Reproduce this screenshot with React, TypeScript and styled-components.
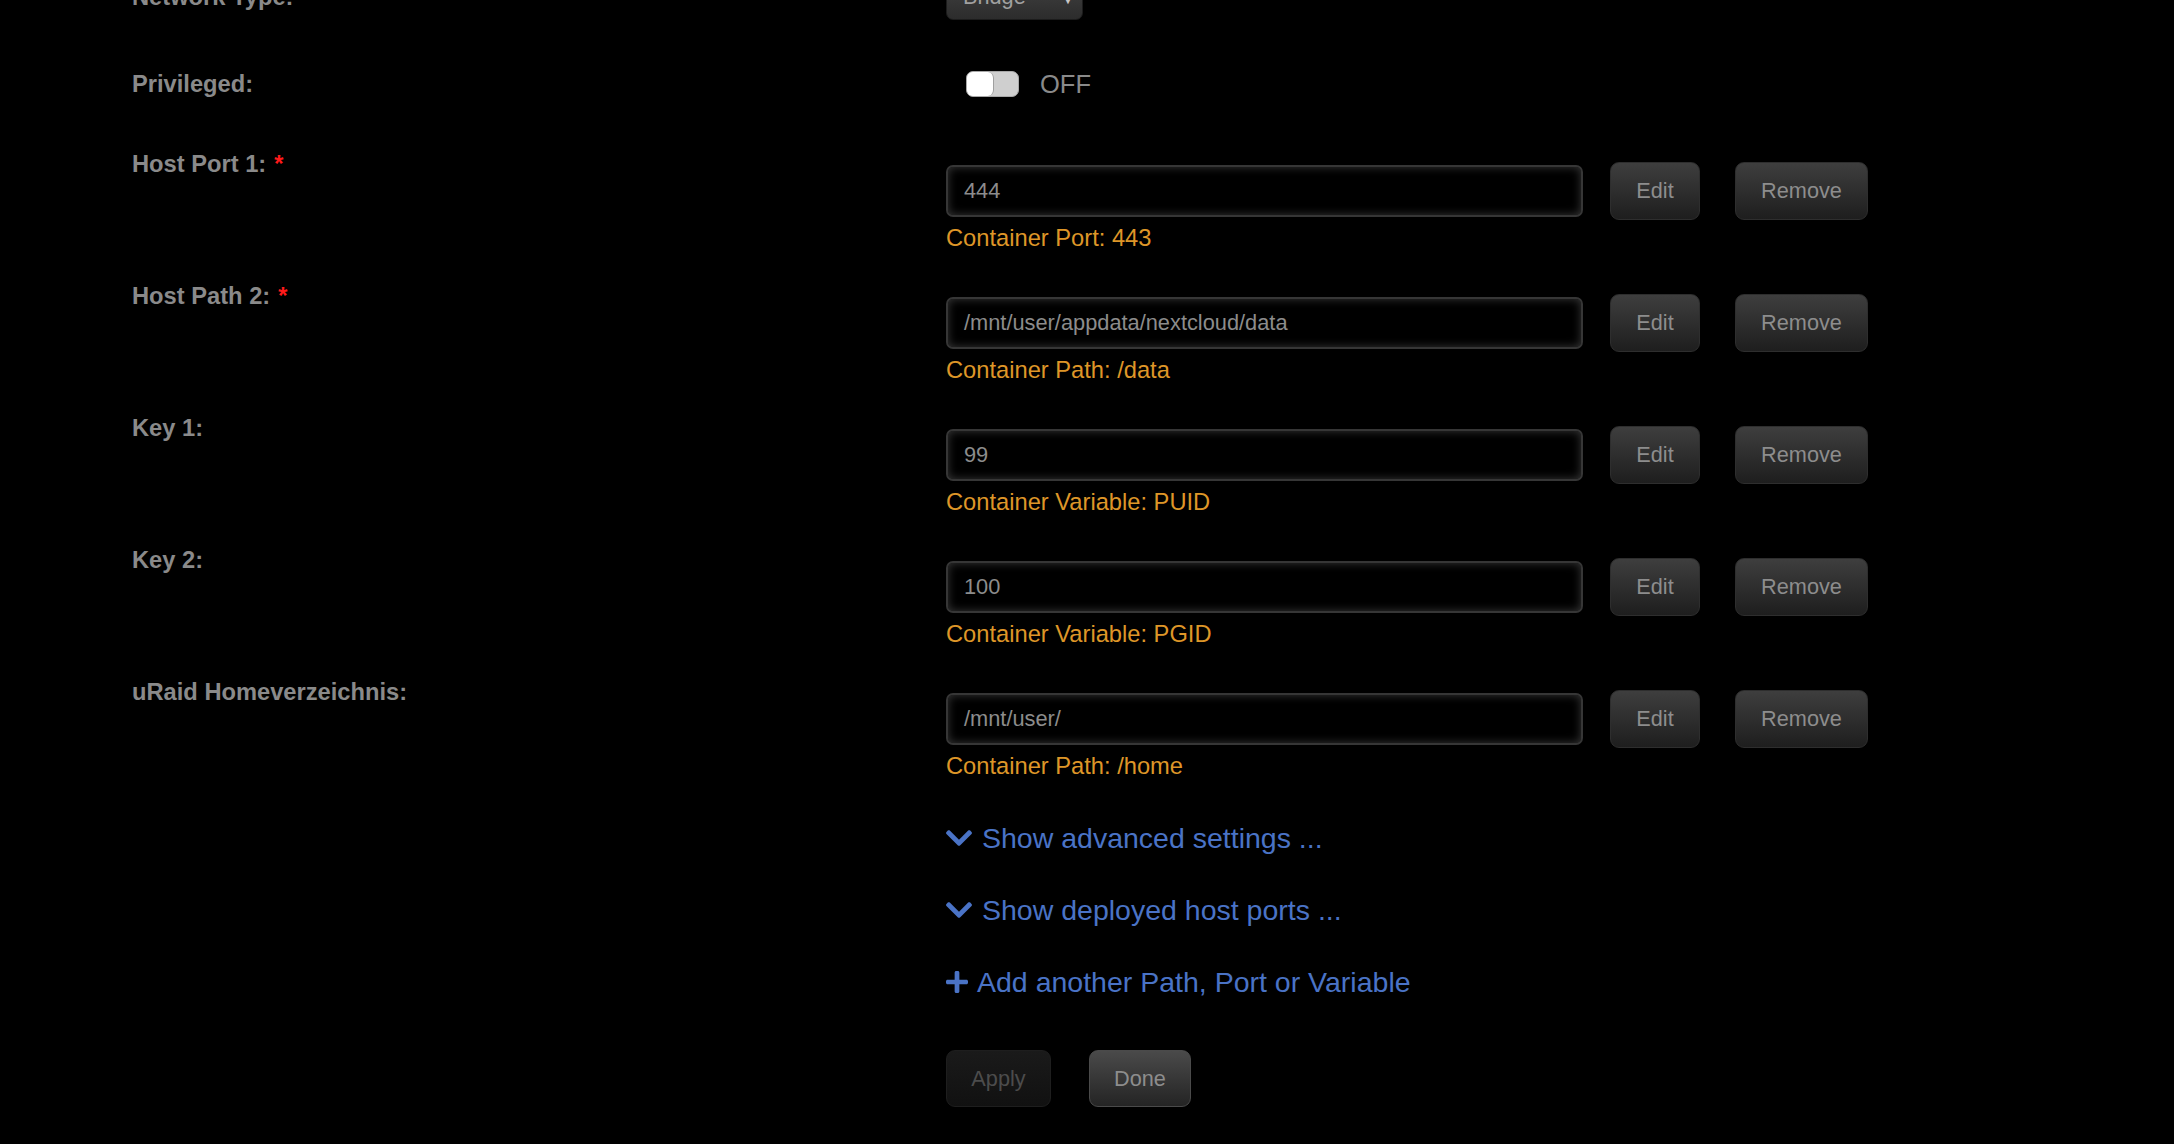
import React from "react";
import styled, { createGlobalStyle } from "styled-components";

const Global = createGlobalStyle`
  html, body {
    margin: 0;
    padding: 0;
    background: #000;
    overflow: hidden;
  }
  body {
    font-family: "Liberation Sans", Arial, sans-serif;
    color: #8a8a8a;
  }
`;

const Page = styled.div`
  width: 2174px;
  height: 1144px;
  overflow: hidden;
  background: #000;
`;

const Form = styled.div`
  display: flex;
  flex-direction: column;
  padding-left: 132px;
  margin-top: -27px;
`;

const Row = styled.div<{ $center?: boolean; $gap: number }>`
  display: grid;
  grid-template-columns: 814px 1fr;
  align-items: ${(p) => (p.$center ? "center" : "start")};
  margin-bottom: ${(p) => p.$gap}px;
`;

const Label = styled.div`
  font-size: 23.7px;
  line-height: 32px;
  font-weight: bold;
  color: #8a8a8a;
  white-space: nowrap;
`;

const Required = styled.span`
  color: #ff1a1a;
  margin-left: 8px;
`;

const Content = styled.div`
  display: flex;
  flex-direction: column;
  padding-top: 14px;
`;

const InputRow = styled.div`
  display: flex;
  align-items: center;
  height: 58px;
`;

const TextInput = styled.div`
  box-sizing: border-box;
  width: 637px;
  height: 52px;
  border: 2px solid #363636;
  border-radius: 7px;
  background: #000;
  box-shadow: inset 0 0 10px rgba(140, 140, 140, 0.4);
  display: flex;
  align-items: center;
  padding-left: 16px;
  font-size: 21.8px;
  color: #8c8c8c;
`;

const Button = styled.div<{ $w: number; $disabled?: boolean; $light?: boolean }>`
  box-sizing: border-box;
  width: ${(p) => p.$w}px;
  height: 57px;
  border-radius: 9px;
  border: 1.5px solid ${(p) => (p.$disabled ? "#1e1e1e" : p.$light ? "#4a4a4a" : "#2e2e2e")};
  background: ${(p) =>
    p.$disabled
      ? "linear-gradient(#1a1a1a, #111111)"
      : p.$light
      ? "linear-gradient(#4a4a4a, #242424)"
      : "linear-gradient(#3e3e3e, #1e1e1e)"};
  color: ${(p) => (p.$disabled ? "#4c4c4c" : "#8d8d8d")};
  font-size: 21.7px;
  display: flex;
  align-items: center;
  justify-content: center;
`;

const EditButton = styled(Button)`
  margin-left: 27px;
  height: 58px;
`;

const RemoveButton = styled(Button)`
  margin-left: 35px;
  height: 58px;
`;

const Hint = styled.div`
  margin-top: 3px;
  font-size: 23.7px;
  line-height: 30px;
  color: #de9628;
`;

const Select = styled.div`
  box-sizing: border-box;
  width: 137px;
  height: 47px;
  border-radius: 7px;
  border: 1px solid #1c1c1c;
  background: linear-gradient(#454545, #2c2c2c);
  display: flex;
  align-items: center;
  justify-content: space-between;
  padding: 0 8px 0 16px;
  font-size: 21.7px;
  color: #a0a0a0;
`;

const Caret = styled.span`
  font-size: 12px;
  color: #c8c8c8;
  padding-top: 6px;
`;

const SwitchWrap = styled.div`
  display: flex;
  align-items: center;
  padding-left: 20px;
  gap: 21px;
`;

const Track = styled.div`
  box-sizing: border-box;
  width: 53px;
  height: 26px;
  border-radius: 7px;
  background: #cfcfcf;
  border: 1.5px solid #a8a8a8;
  display: flex;
  align-items: stretch;
`;

const Knob = styled.div`
  width: 26px;
  border-radius: 6px;
  background: #fff;
  border-right: 1.5px solid #a0a0a0;
`;

const SwitchText = styled.span`
  font-size: 25.5px;
  color: #8a8a8a;
`;

const Actions = styled.div`
  display: flex;
  flex-direction: column;
  margin-left: 814px;
  margin-top: 12px;
`;

const LinkLine = styled.div<{ $gap: number }>`
  display: flex;
  align-items: center;
  gap: ${(p) => p.$gap}px;
  height: 36px;
  margin-bottom: 36px;
  font-size: 28.5px;
  color: #4a73c6;
  white-space: nowrap;
`;

const ButtonBar = styled.div`
  display: flex;
  gap: 38px;
  margin-top: 14px;
`;

const Chevron = () => (
  <svg width="26" height="16" viewBox="5 122 438 268" fill="#4a73c6">
    <path d="M207.029 381.476L12.686 187.132c-9.373-9.373-9.373-24.569 0-33.941l22.667-22.667c9.357-9.357 24.522-9.375 33.901-.04L224 284.505l154.745-154.021c9.379-9.335 24.544-9.317 33.901.04l22.667 22.667c9.373 9.373 9.373 24.569 0 33.941L240.971 381.476c-9.373 9.372-24.569 9.372-33.942 0z" />
  </svg>
);

const Plus = () => (
  <svg width="22" height="22" viewBox="0 32 448 448" fill="#4a73c6">
    <path d="M416 208H272V64c0-17.67-14.330-32-32-32h-32c-17.67 0-32 14.33-32 32v144H32c-17.67 0-32 14.33-32 32v32c0 17.67 14.33 32 32 32h144v144c0 17.67 14.33 32 32 32h32c17.67 0 32-14.33 32-32V304h144c17.67 0 32-14.33 32-32v-32c0-17.67-14.33-32-32-32z" />
  </svg>
);

type Entry = { label: string; required?: boolean; value: string; hint: string };

const entries: Entry[] = [
  { label: "Host Port 1:", required: true, value: "444", hint: "Container Port: 443" },
  { label: "Host Path 2:", required: true, value: "/mnt/user/appdata/nextcloud/data", hint: "Container Path: /data" },
  { label: "Key 1:", value: "99", hint: "Container Variable: PUID" },
  { label: "Key 2:", value: "100", hint: "Container Variable: PGID" },
  { label: "uRaid Homeverzeichnis:", value: "/mnt/user/", hint: "Container Path: /home" },
];

export default function App() {
  return (
    <Page>
      <Global />
      <Form>
        <Row $center $gap={48}>
          <Label>Network Type:</Label>
          <Select>
            <span>Bridge</span>
            <Caret>▼</Caret>
          </Select>
        </Row>
        <Row $center $gap={48}>
          <Label>Privileged:</Label>
          <SwitchWrap>
            <Track>
              <Knob />
            </Track>
            <SwitchText>OFF</SwitchText>
          </SwitchWrap>
        </Row>
        {entries.map((e) => (
          <Row key={e.label} $gap={27}>
            <Label>
              {e.label}
              {e.required && <Required>*</Required>}
            </Label>
            <Content>
              <InputRow>
                <TextInput>{e.value}</TextInput>
                <EditButton $w={90}>Edit</EditButton>
                <RemoveButton $w={133}>Remove</RemoveButton>
              </InputRow>
              <Hint>{e.hint}</Hint>
            </Content>
          </Row>
        ))}
        <Actions>
          <LinkLine $gap={10}>
            <Chevron />
            <span>Show advanced settings ...</span>
          </LinkLine>
          <LinkLine $gap={10}>
            <Chevron />
            <span>Show deployed host ports ...</span>
          </LinkLine>
          <LinkLine $gap={9}>
            <Plus />
            <span>Add another Path, Port or Variable</span>
          </LinkLine>
          <ButtonBar>
            <Button $w={105} $disabled>Apply</Button>
            <Button $w={102} $light>Done</Button>
          </ButtonBar>
        </Actions>
      </Form>
    </Page>
  );
}
